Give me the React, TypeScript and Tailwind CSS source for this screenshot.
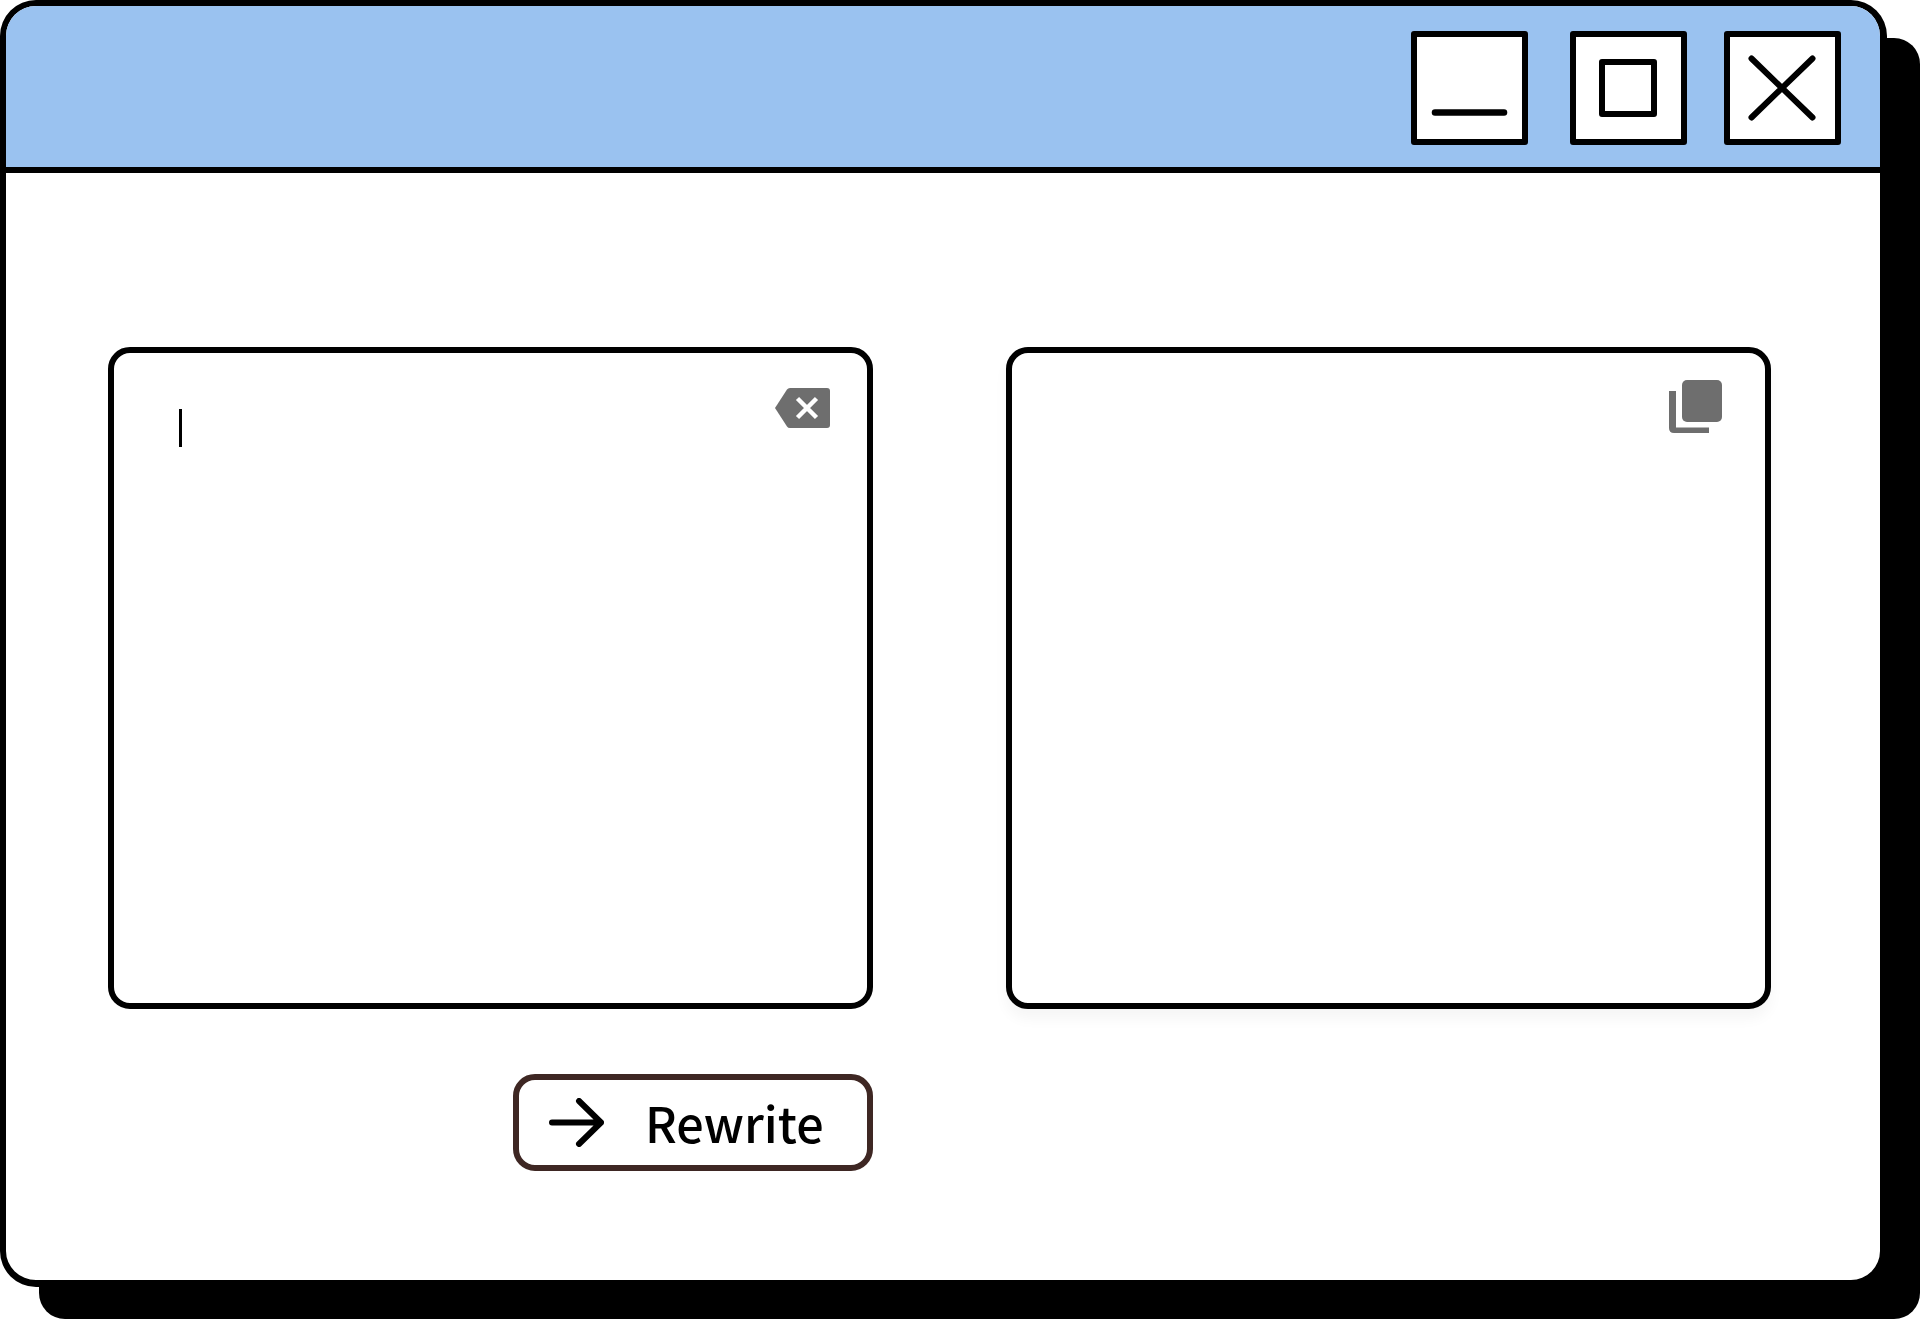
export default function App()
{
    return (
    <div className="relative w-[1920px] h-[1319px] overflow-hidden bg-white font-['Noto_Sans_CJK_SC','Noto_Sans',sans-serif]">
        {/* offset black shadow behind the window */}
        <div className="absolute left-[39px] top-[38px] w-[1881px] h-[1281px] rounded-[26px] bg-black"></div>

        <div className="relative w-[1887px] h-[1287px] rounded-[36px] border-6 border-r-7 border-b-7 border-black bg-white overflow-hidden">
            <header className="flex items-start h-[167px] pt-[25px] pr-[39px] justify-end border-b-6 border-black bg-[#9ac2f0]">
                <button className="flex w-[117px] h-[114px] border-6 border-black rounded-[3px] bg-white">
                    <svg width="105" height="102" viewBox="0 0 105 102" className="block">
                        <line x1="18" y1="75.5" x2="87" y2="75.5" stroke="black" strokeWidth="6.5" strokeLinecap="round" />
                    </svg>
                </button>
                <button className="flex items-center justify-center ml-[42px] w-[117px] h-[114px] border-6 border-black rounded-[3px] bg-white">
                    <div className="w-[58px] h-[58px] mr-[2px] border-6 border-black rounded-[3px]"></div>
                </button>
                <button className="flex ml-[37px] w-[117px] h-[114px] border-6 border-black rounded-[3px] bg-white">
                    <svg width="105" height="102" viewBox="0 0 105 102" className="block">
                        <path d="M21.500 21.500 L82.500 80.500 M82.500 21.500 L21.500 80.500" stroke="black" strokeWidth="6" strokeLinecap="round" fill="none" />
                    </svg>
                </button>
            </header>

            <main className="grid grid-cols-[765px_765px] gap-x-[133px] pl-[102px] pt-[174px]">
                <section className="flex justify-between items-start h-[662px] pl-[65px] pr-[37px] pt-[35px] border-6 border-black rounded-[22px] bg-white">
                    <div className="w-[3px] h-[38px] mt-[21px] bg-black"></div>
                    <svg width="55" height="40" viewBox="0 0 55 40" className="block">
                        <path d="M15 0 H52 Q55 0 55 3 V37 Q55 40 52 40 H15 Q13 40 12 38.500 L0 20 L12 1.500 Q13 0 15 0 Z" fill="#6e6e6e" />
                        <path d="M22.500 10.500 L41.500 29.500 M41.500 10.500 L22.500 29.500" stroke="white" strokeWidth="4.500" fill="none" />
                    </svg>
                </section>

                <section className="flex justify-end items-start h-[662px] pr-[43px] pt-[27px] border-6 border-black rounded-[22px] bg-white shadow-[0_10px_14px_rgba(0,0,0,0.04)]">
                    <svg width="53" height="53" viewBox="0 0 53 53" className="block">
                        <rect x="13" y="0" width="40" height="42" rx="5" fill="#6e6e6e" />
                        <path d="M0 11 H7 V47.500 H40 V53 H5 Q0 53 0 48 Z" fill="#6e6e6e" />
                    </svg>
                </section>

                <button className="flex items-center justify-self-end mt-[65px] w-[360px] h-[97px] pl-[30px] border-6 border-[#3e2723] rounded-[22px] bg-white">
                    <svg width="55" height="49" viewBox="0 0 55 49" className="block shrink-0">
                        <path d="M3 24.500 H52 M30 3 L52 24.500 L30 46" stroke="black" strokeWidth="6" strokeLinecap="round" strokeLinejoin="round" fill="none" />
                    </svg>
                    <span className="ml-[41px] -mt-[1px] text-[48.5px] leading-none font-medium text-black">Rewrite</span>
                </button>
            </main>
        </div>
    </div>
    );
}
